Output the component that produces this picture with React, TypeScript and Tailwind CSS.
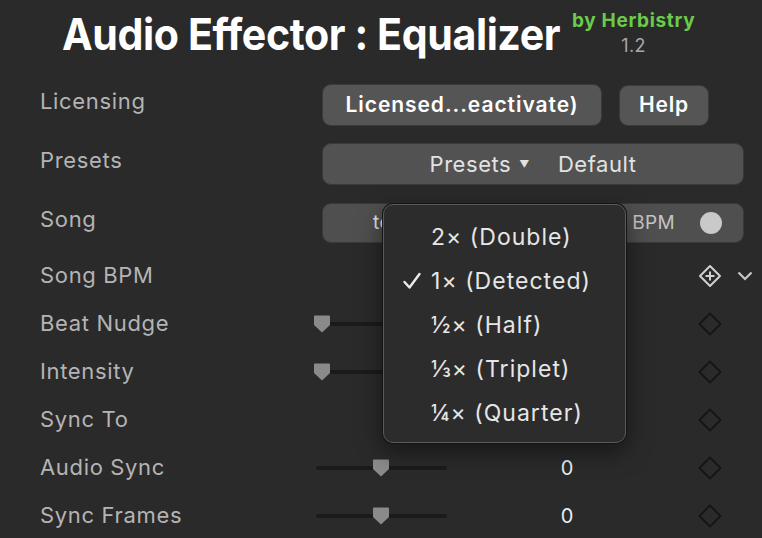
import type { ReactNode } from "react";

const FONT = { fontFamily: "Inter, 'Noto Sans', sans-serif" };

const labelCls = "text-[22px] tracking-[0.03em] text-[#b4b4b4]";

function Thumb() {
  return (
    <svg width="18" height="20" viewBox="0 0 18 20" className="shrink-0">
      <path d="M2 1.5h14a1 1 0 0 1 1 1v8.5l-8 7.5-8-7.5V2.5a1 1 0 0 1 1-1z" fill="#8a8a8a" />
    </svg>
  );
}

function Slider({ pos }: { pos: number }) {
  // pos 0..1 along a 131px track
  return (
    <div className="relative h-5 w-[131px]">
      <div className="absolute left-0 right-0 top-[8px] h-[4px] rounded-full bg-[#1b1b1b]" />
      <div className="absolute top-0" style={{ left: pos * 118 - 3 }}>
        <Thumb />
      </div>
    </div>
  );
}

function Diamond() {
  return (
    <svg width="24" height="24" viewBox="0 0 24 24">
      <path d="M12 1.5l10.5 10.5-10.5 10.5-10.5-10.5z" fill="none" stroke="#151515" strokeWidth="1.8" strokeLinejoin="round" />
    </svg>
  );
}

function DiamondAdd() {
  return (
    <svg width="24" height="24" viewBox="0 0 24 24">
      <path d="M12 2l10 10-10 10-10-10z" fill="none" stroke="#cfcfcf" strokeWidth="2" strokeLinejoin="round" />
      <path d="M12 7.5v9M7.5 12h9" stroke="#cfcfcf" strokeWidth="2" />
    </svg>
  );
}

function Row({ label, h, children }: { label: string; h: string; children?: ReactNode }) {
  return (
    <div className={`flex items-center ${h}`}>
      <div className={`w-[322px] shrink-0 pb-[8px] pl-[40px] ${labelCls}`}>{label}</div>
      <div className="flex flex-1 items-center">{children}</div>
    </div>
  );
}

// value is null where the open menu hides it
function SliderRow({ label, pos, value }: { label: string; pos: number; value: string | null }) {
  return (
    <div className="flex h-12 items-center">
      <div className={`w-[316px] shrink-0 pb-[2px] pl-[40px] ${labelCls}`}>{label}</div>
      <Slider pos={pos} />
      <div className="w-[240px] text-center text-[20px] text-[#ececec]">{value}</div>
      <div className="ml-[11px] w-[24px]">
        <Diamond />
      </div>
    </div>
  );
}

function PlainRow({ label, children }: { label: string; children?: ReactNode }) {
  return (
    <div className="flex h-12 items-center">
      <div className={`w-[316px] shrink-0 pb-[2px] pl-[40px] ${labelCls}`}>{label}</div>
      <div className="ml-[382px] flex items-center">{children}</div>
    </div>
  );
}

function Check() {
  return (
    <svg width="20" height="20" viewBox="0 0 20 20">
      <path d="M2.5 11l5 5.5L17.5 3" fill="none" stroke="#ececec" strokeWidth="2.4" strokeLinecap="round" strokeLinejoin="round" />
    </svg>
  );
}

const ITEMS = [
  { text: "2× (Double)", checked: false },
  { text: "1× (Detected)", checked: true },
  { text: "½× (Half)", checked: false },
  { text: "⅓× (Triplet)", checked: false },
  { text: "¼× (Quarter)", checked: false },
];

export default function App() {
  return (
    <div className="relative h-[538px] w-[762px] overflow-hidden bg-[#2a2a2a]" style={FONT}>
      {/* header */}
      <div className="flex h-[76px] items-start">
        <div className="ml-[62px] w-[500px] shrink-0">
          <h1 className="mt-[10px] origin-left scale-x-[0.935] whitespace-nowrap text-[44px] font-bold leading-[48px] tracking-[-0.01em] text-white">
            Audio Effector : Equalizer
          </h1>
        </div>
        <div className="ml-[10px] mt-[9px] flex flex-col items-center whitespace-nowrap">
          <span className="text-[19px] font-bold leading-[24px] tracking-[0.035em] text-[#6ccb4a]">by Herbistry</span>
          <span className="text-[18px] leading-[26px] tracking-[0.02em] text-[#a8a8a8]">1.2</span>
        </div>
      </div>

      <Row label="Licensing" h="h-[58px]">
        <div className="flex items-center gap-[17px]">
          <button className="h-[42px] w-[280px] rounded-[9px] border border-[#3a3a3a] bg-[#555555] text-[21px] font-semibold tracking-[0.045em] text-white">
            Licensed...eactivate)
          </button>
          <button className="h-[41px] w-[90px] rounded-[9px] border border-[#3a3a3a] bg-[#555555] text-[21px] font-semibold tracking-[0.04em] text-white">
            Help
          </button>
        </div>
      </Row>

      <Row label="Presets" h="h-[60px]">
        <div className="flex h-[42px] w-[422px] items-center justify-center rounded-[9px] border border-[#3a3a3a] bg-[#525252] text-[22px] tracking-[0.025em] text-[#e2e2e2]">
          <span>Presets</span>
          <span className="ml-[8px] text-[10px]">▼</span>
          <span className="ml-[28px]">Default</span>
        </div>
      </Row>

      <Row label="Song" h="h-[58px]">
        <div className="flex h-[40px] w-[422px] items-center rounded-[9px] border border-[#3a3a3a] bg-[#4f4f4f] text-[19px] tracking-[0.02em] text-[#c4c4c4]">
          <span className="ml-[50px] text-[#e4e4e4]">tempo</span>
          <span className="ml-auto">BPM</span>
          <span className="ml-[25px] mr-[21px] h-[22px] w-[22px] rounded-full bg-[#c9c9c9]" />
        </div>
      </Row>

      <PlainRow label="Song BPM">
        <DiamondAdd />
        <svg width="16" height="16" viewBox="0 0 16 16" className="ml-[15px]">
          <path d="M1.5 4.5l6.5 6.5 6.5-6.5" fill="none" stroke="#c8c8c8" strokeWidth="2.2" />
        </svg>
      </PlainRow>
      <SliderRow label="Beat Nudge" pos={0} value={null} />
      <SliderRow label="Intensity" pos={0} value={null} />
      <PlainRow label="Sync To">
        <Diamond />
      </PlainRow>
      <SliderRow label="Audio Sync" pos={0.5} value="0" />
      <SliderRow label="Sync Frames" pos={0.5} value="0" />

      {/* open pop-up menu */}
      <div className="absolute left-[383px] top-[204px] h-[239px] w-[243px] rounded-[10px] border border-[#5a5a5a] bg-[#2c2c2c] py-[10px] shadow-[0_0_0_1px_#151515,0_8px_24px_rgba(0,0,0,0.5)]">
        {ITEMS.map((it) => (
          <div key={it.text} className="flex h-[44px] items-center text-[23px] tracking-[0.045em] text-[#e6e6e6]">
            <span className="flex w-[47px] justify-end pr-[9px]">{it.checked ? <Check /> : null}</span>
            <span>{it.text}</span>
          </div>
        ))}
      </div>
    </div>
  );
}
